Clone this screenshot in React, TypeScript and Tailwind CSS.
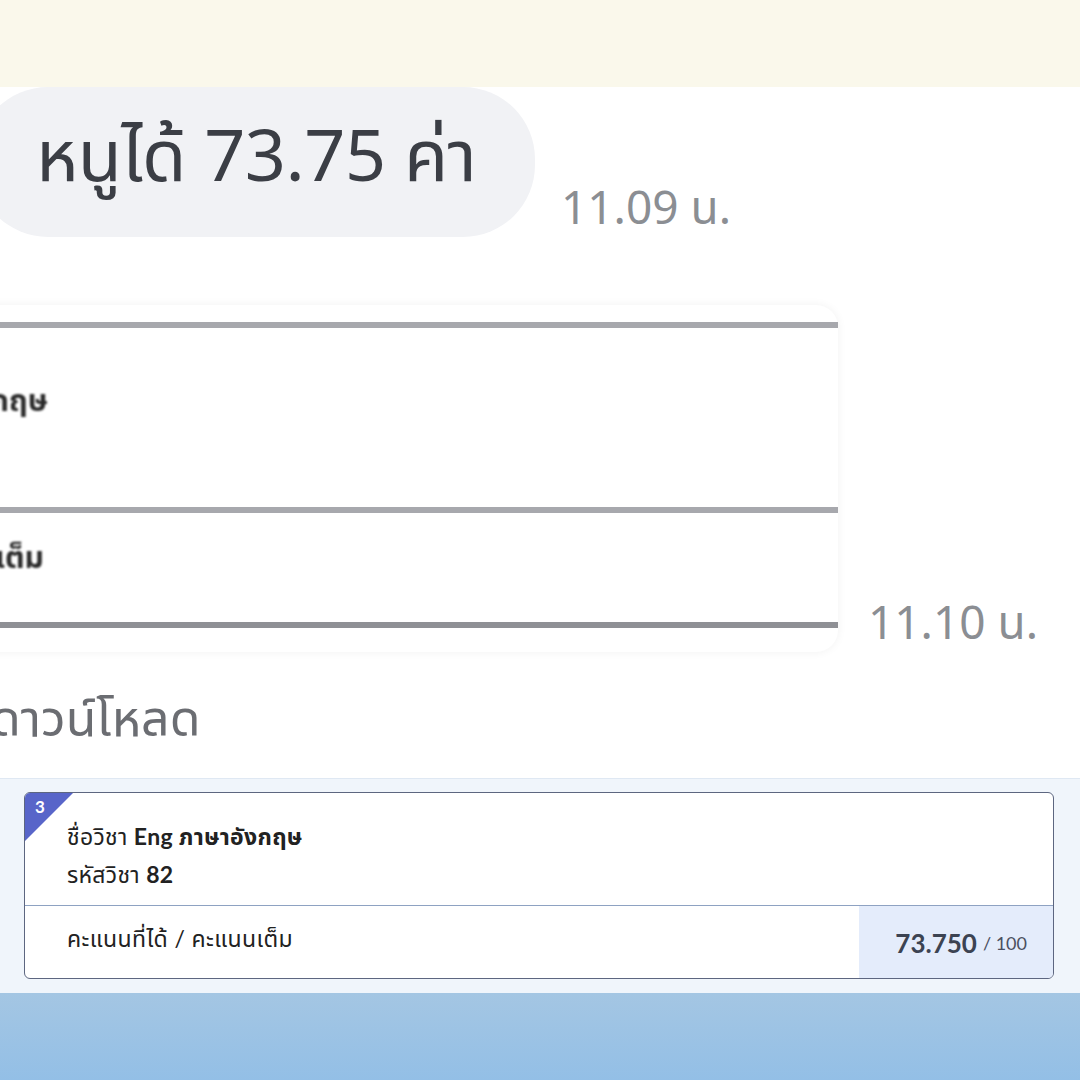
import React from "react";

const chatFont = { fontFamily: '"Noto Sans Thai", Roboto, "Noto Sans", sans-serif' };
const cardFont = { fontFamily: 'Lato, "Noto Sans Thai", "Open Sans", sans-serif' };

export default function App() {
  return (
    <div className="w-[1080px] h-[1080px] overflow-hidden bg-white flex flex-col">
      {/* top beige strip */}
      <div className="h-[87px] bg-[#faf8eb] shrink-0" />

      {/* chat area */}
      <div className="h-[691px] shrink-0 bg-white flex flex-col" style={chatFont}>
        {/* bubble row */}
        <div className="flex items-end">
          <div className="-ml-[24px] w-[559px] h-[150px] rounded-[72px] bg-[#f1f2f5] flex items-center pl-[60px] pb-[6px]">
            <span className="text-[72px] leading-none text-[#3b3e45] whitespace-nowrap tracking-[-0.5px]">หนูได้ 73.75 ค่า</span>
          </div>
          <span className="ml-[26px] mb-[4px] text-[46px] leading-none text-[#8b8e93] whitespace-nowrap">11.09 น.</span>
        </div>

        {/* blurred table card row */}
        <div className="flex items-end mt-[68px]">
          <div className="-ml-[24px] w-[862px] h-[347px] rounded-[22px] bg-white shadow-[0_0_10px_rgba(0,0,0,0.06)] flex flex-col pt-[17px] blur-[0.6px]">
            <div className="h-[6px] bg-[#a7a8ad]" />
            <div className="h-[179px] flex items-start pt-[52px]">
              <div className="w-[72px] flex justify-end whitespace-nowrap">
                <span className="text-[30px] font-bold text-[#2a2a2a] blur-[1.2px]">ภาษาอังกฤษ</span>
              </div>
            </div>
            <div className="h-[6px] bg-[#a7a8ad]" />
            <div className="h-[109px] flex items-start pt-[24px]">
              <div className="w-[68px] flex justify-end whitespace-nowrap">
                <span className="text-[30px] font-bold text-[#2a2a2a] blur-[1.2px]">คะแนนเต็ม</span>
              </div>
            </div>
            <div className="h-[6px] bg-[#8f9095]" />
          </div>
          <span className="ml-[30px] mb-[4px] text-[46px] leading-none text-[#8b8e93] whitespace-nowrap">11.10 น.</span>
        </div>

        {/* download label */}
        <div className="mt-[44px] -ml-[10px] text-[50px] leading-none text-[#6b6d72] whitespace-nowrap blur-[0.4px]">ดาวน์โหลด</div>
      </div>

      {/* grades section */}
      <div className="h-[215px] shrink-0 bg-[#f0f5fb] border-t border-[#dfe8f3] pt-[13px] px-[24px]" style={cardFont}>
        <div className="relative h-[187px] w-[1030px] bg-white border border-[#5d6680] rounded-[6px] overflow-hidden flex flex-col">
          <div className="absolute left-0 top-0 w-0 h-0 border-t-[48px] border-r-[48px] border-t-[#5865c9] border-r-transparent" />
          <span className="absolute left-[10px] top-[5px] text-[17px] font-bold text-white leading-none">3</span>
          <div className="h-[112px] flex flex-col justify-center pl-[42px] pt-[12px] gap-[10px] text-[23px] text-[#222] leading-[28px] tracking-[0.3px]">
            <div>ชื่อวิชา <span className="font-bold">Eng ภาษาอังกฤษ</span></div>
            <div>รหัสวิชา <span className="font-bold">82</span></div>
          </div>
          <div className="h-px bg-[#8ea2c2]" />
          <div className="flex-1 flex">
            <div className="flex-1 pl-[42px] pt-[15px] text-[23px] text-[#222] tracking-[0.4px]">คะแนนที่ได้ / คะแนนเต็ม</div>
            <div className="w-[194px] bg-[#e4ecfb] flex items-center justify-end pr-[26px] pt-[2px]">
              <span className="text-[26px] font-bold text-[#3c4352]">73.750</span>
              <span className="ml-[6px] text-[18px] text-[#4b5060]">/ 100</span>
            </div>
          </div>
        </div>
      </div>

      {/* bottom blue gradient */}
      <div className="flex-1 bg-gradient-to-b from-[#a4c6e3] to-[#93bfe6]" />
    </div>
  );
}
